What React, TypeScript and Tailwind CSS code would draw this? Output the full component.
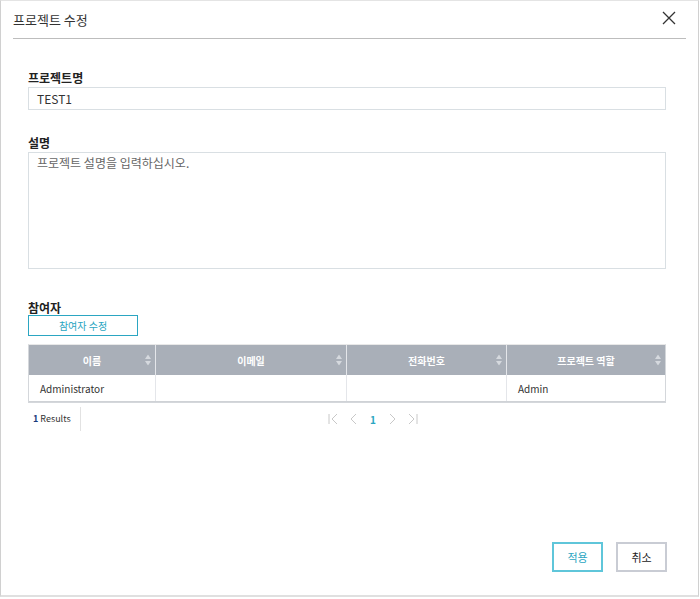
import React from "react";

const font = { fontFamily: '"Noto Sans CJK KR", "Noto Sans", sans-serif' };

function SortIcon() {
  return (
    <svg width="6" height="11" viewBox="0 0 6 11" className="shrink-0">
      <path d="M3 0 L6 4.5 L0 4.5 Z" fill="#d5d9de" />
      <path d="M3 11 L6 6.5 L0 6.5 Z" fill="#d5d9de" />
    </svg>
  );
}

function HeaderCell({ label, w, last }: { label: string; w: string; last?: boolean }) {
  return (
    <div className={`${w} relative flex items-center justify-center h-full ${last ? "" : "border-r border-[#e4e6ea]"}`}>
      <span className="text-[10px] font-bold text-white">{label}</span>
      <div className="absolute right-[4px] top-1/2 -translate-y-1/2 flex">
        <SortIcon />
      </div>
    </div>
  );
}

export default function App() {
  return (
    <div style={font} className="w-[700px] h-[599px] bg-white">
      <div className="w-[699px] h-[597px] border border-[#d0d0d0] border-t-[#e4e4e4] border-b-[#e0e0e0] border-b-2 flex flex-col">
        {/* Header */}
        <div className="mx-[12px] h-[38px] border-b border-[#bdbdbd] flex items-center justify-between">
          <span className="text-[13px] text-[#333]">프로젝트 수정</span>
          <svg width="16" height="16" viewBox="0 0 16 16" className="mr-[9px] mt-[-4px]">
            <path d="M2 2 L14 14 M14 2 L2 14" stroke="#333" strokeWidth="1.3" />
          </svg>
        </div>

        <div className="pl-[27px] pr-[32px] flex flex-col">
          {/* Project name */}
          <div className="mt-[30px] text-[12px] font-bold text-[#222] leading-[18px]">프로젝트명</div>
          <div className="h-[23px] border border-[#d9dfe3] flex items-center px-[8px] text-[12px] text-[#333]">TEST1</div>

          {/* Description */}
          <div className="mt-[24px] text-[12px] font-bold text-[#222] leading-[18px]">설명</div>
          <div className="h-[117px] border border-[#d9dfe3] px-[8px] pt-[1px] text-[12px] text-[#666] leading-[17px]">
            프로젝트 설명을 입력하십시오.
          </div>

          {/* Participants */}
          <div className="mt-[32px] text-[12px] font-bold text-[#222] leading-[14px]">참여자</div>
          <div className="w-[110px] h-[21px] border border-[#2ba6c2] flex items-center justify-center text-[10px] text-[#2ba6c2]">
            참여자 수정
          </div>

          {/* Table */}
          <div className="mt-[8px] border border-[#d4d7db] border-t-[#e8e8e8]">
            <div className="flex h-[30px] bg-[#a9afb8]">
              <HeaderCell label="이름" w="w-[127px]" />
              <HeaderCell label="이메일" w="w-[191px]" />
              <HeaderCell label="전화번호" w="w-[160px]" />
              <HeaderCell label="프로젝트 역할" w="flex-1" last />
            </div>
            <div className="flex h-[27px] text-[10px] text-[#333] border-b border-[#cfd2d6]">
              <div className="w-[127px] border-r border-[#e4e6ea] flex items-center pl-[11px]">Administrator</div>
              <div className="w-[191px] border-r border-[#e4e6ea]" />
              <div className="w-[160px] border-r border-[#e4e6ea]" />
              <div className="flex-1 flex items-center pl-[11px]">Admin</div>
            </div>
          </div>

          {/* Footer */}
          <div className="relative h-[32px] flex items-center">
            <div className="w-[53px] h-[24px] border-r border-[#e2e2e2] flex items-center pl-[5px] text-[9px] text-[#333]">
              <span className="text-[#1a3a7a] font-bold mr-[2px]">1</span>Results
            </div>
            <div className="absolute left-[299px] top-0 h-full flex items-center gap-[9px] text-[#c4c4c4]">
              <svg width="12" height="12" viewBox="0 0 12 12">
                <path d="M2 1 V11 M10 1 L5 6 L10 11" stroke="#c8c8c8" strokeWidth="1" fill="none" />
              </svg>
              <svg width="12" height="12" viewBox="0 0 12 12">
                <path d="M8 1 L3 6 L8 11" stroke="#c8c8c8" strokeWidth="1" fill="none" />
              </svg>
              <span className="text-[10px] font-bold text-[#2ba6c2] w-[8px] text-center">1</span>
              <svg width="12" height="12" viewBox="0 0 12 12">
                <path d="M4 1 L9 6 L4 11" stroke="#c8c8c8" strokeWidth="1" fill="none" />
              </svg>
              <svg width="12" height="12" viewBox="0 0 12 12">
                <path d="M2 1 L7 6 L2 11 M10 1 V11" stroke="#c8c8c8" strokeWidth="1" fill="none" />
              </svg>
            </div>
          </div>
        </div>

        <div className="flex-1" />

        {/* Buttons */}
        <div className="flex justify-end gap-[13px] pr-[31px] mb-[23px]">
          <div className="w-[51px] h-[30px] border-2 border-[#5fc6da] flex items-center justify-center text-[11px] text-[#2ba6c2]">적용</div>
          <div className="w-[51px] h-[30px] border-2 border-[#c9ccd4] flex items-center justify-center text-[11px] text-[#222]">취소</div>
        </div>
      </div>
    </div>
  );
}
